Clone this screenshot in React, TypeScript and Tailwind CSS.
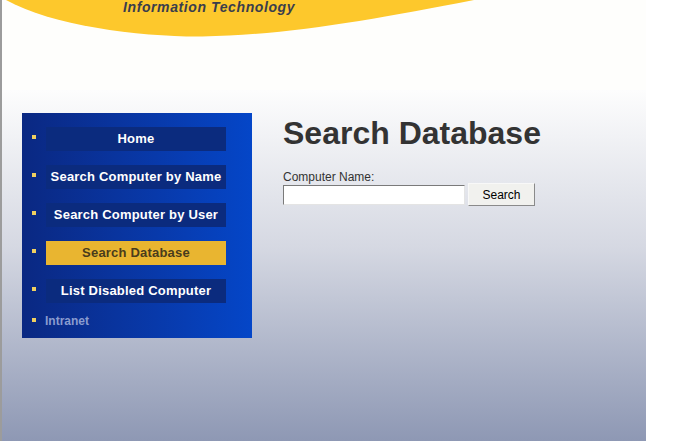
const NAV = [
  { label: "Home", active: false },
  { label: "Search Computer by Name", active: false },
  { label: "Search Computer by User", active: false },
  { label: "Search Database", active: true },
  { label: "List Disabled Computer", active: false },
];

function Swoosh() {
  return (
    <svg width="480" height="40" viewBox="0 0 480 40" className="absolute left-0 top-0" aria-hidden>
      <path d="M4 0 C 50 26, 140 37, 200 36.5 C 285 35, 370 20, 472 0 Z" fill="#fdc82c" />
    </svg>
  );
}

export default function App() {
  return (
    <div
      className="flex h-[441px] w-[683px] overflow-hidden bg-white"
      style={{ fontFamily: '"Liberation Sans", Arial, sans-serif' }}
    >
      <div className="w-[2px] shrink-0 bg-[#9c9c9c]" />
      <div className="flex w-[644px] shrink-0 flex-col">
        <header className="relative h-[90px] shrink-0 bg-[#fefefc]">
          <Swoosh />
          <p className="absolute left-[121px] top-0 text-[14px] font-bold italic leading-[14px] tracking-[0.6px] text-[#3a3d4c]">
            Information Technology
          </p>
        </header>

        <main className="flex flex-1 items-start gap-[31px] bg-gradient-to-b from-[#fdfdfd] via-[#d5d8e2] via-45% to-[#8e98b4] pl-[20px] pt-[23px]">
          <nav className="flex h-[225px] w-[230px] shrink-0 flex-col gap-[14px] bg-gradient-to-r from-[#0a2882] to-[#0446c8] pl-[10px] pr-[26px] pt-[14px]">
            {NAV.map((item) => (
              <div key={item.label} className="flex items-center gap-[10px]">
                <span className="mb-[4px] h-[4px] w-[4px] shrink-0 bg-[#f0d060]" />
                <a
                  href="#"
                  className={
                    item.active
                      ? "flex h-[24px] w-[180px] items-center justify-center bg-[#e9b530] text-[13px] font-bold tracking-[0.2px] text-[#4a3c1c]"
                      : "flex h-[24px] w-[180px] items-center justify-center bg-[#0b2b7e] text-[13px] font-bold tracking-[0.2px] text-white"
                  }
                >
                  {item.label}
                </a>
              </div>
            ))}
            <div className="-mt-[5px] flex items-center gap-[9px]">
              <span className="mb-[2px] h-[4px] w-[4px] shrink-0 bg-[#f0d060]" />
              <a href="#" className="text-[12px] font-bold text-[#8a9ccf]">
                Intranet
              </a>
            </div>
          </nav>

          <section className="flex flex-col pt-[4px]">
            <h1 className="text-[32px] font-bold leading-[32px] text-[#333333]">Search Database</h1>
            <label className="mt-[21px] text-[12px] leading-[14px] text-[#333333]">Computer Name:</label>
            <div className="-mt-[1px] flex items-center gap-[3px]">
              <input
                type="text"
                className="mt-[1px] h-[20px] w-[182px] border border-b-[#e4e4e4] border-l-[#7a7a7a] border-r-[#e4e4e4] border-t-[#7a7a7a] bg-white px-1 text-[12px] outline-none"
              />
              <button className="h-[23px] w-[67px] border border-b-[#8a8a8a] border-l-[#f8f8f8] border-r-[#8a8a8a] border-t-[#f8f8f8] bg-[#f1f1ee] text-[12px] text-black">
                Search
              </button>
            </div>
          </section>
        </main>
      </div>
      <div className="flex-1 bg-white" />
    </div>
  );
}
